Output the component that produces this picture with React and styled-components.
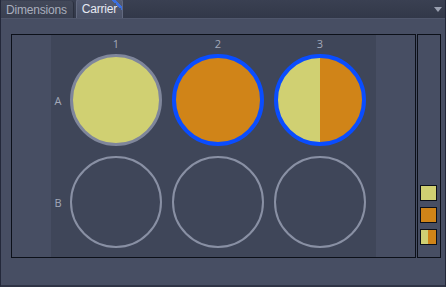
import React from "react";
import styled, { createGlobalStyle, css } from "styled-components";

const YELLOW = "#d0d072";
const ORANGE = "#d08418";
const BLUE = "#0a4dff";
const GREY_RING = "#8990a4";

const Global = createGlobalStyle`
  html, body { margin: 0; padding: 0; background: #474e63; }
  body { font-family: "Liberation Sans", "Open Sans", sans-serif; }
`;

const Window = styled.div`
  width: 446px;
  height: 287px;
  box-sizing: border-box;
  background: #474e63;
  border-left: 1px solid #23283a;
  border-right: 1px solid #23283a;
  border-bottom: 2px solid #2f3446;
  display: flex;
  flex-direction: column;
  overflow: hidden;
`;

const TabBar = styled.div`
  height: 19px;
  flex: none;
  display: flex;
  align-items: flex-end;
  background: linear-gradient(#3a4052, #323849);
  border-bottom: 1px solid #50576c;
  box-sizing: border-box;
  margin-left: -1px;
  margin-right: -1px;
`;

const Tab = styled.div`
  position: relative;
  height: ${(p) => (p.$active ? 19 : 17)}px;
  box-sizing: border-box;
  display: flex;
  align-items: center;
  padding: 0 ${(p) => (p.$active ? 5 : 6)}px;
  font-size: 12px;
  letter-spacing: -0.2px;
  border-radius: 3px 3px 0 0;
  margin-right: 2px;
  ${(p) =>
    p.$active
      ? css`
          color: #e6e9f2;
          background: linear-gradient(#555c73, #4a5166);
          border: 1px solid #62697f;
          border-bottom: none;
        `
      : css`
          color: #a9aebd;
          background: linear-gradient(#424859, #3a4051);
          border-right: 1px solid #2a2f3e;
        `}
`;

const Corner = styled.span`
  position: absolute;
  top: 0;
  right: 0;
  width: 10px;
  height: 10px;
  background: linear-gradient(45deg, transparent 50%, #3c6fe0 50%, #3c6fe0 70%, transparent 70%);
  border-top-right-radius: 3px;
`;

const Spacer = styled.div`
  flex: 1;
`;

const DropArrow = styled.div`
  align-self: center;
  width: 0;
  height: 0;
  margin-right: 4px;
  border-left: 4px solid transparent;
  border-right: 4px solid transparent;
  border-top: 5px solid #9aa0b0;
`;

const Body = styled.div`
  display: flex;
  padding: 15px 0 0 10px;
`;

const Frame = styled.div`
  width: 405px;
  height: 224px;
  box-sizing: border-box;
  border: 1px solid #0c1019;
  display: flex;
`;

const SideCol = styled.div`
  width: 39px;
  background: #474e63;
`;

const Plate = styled.div`
  width: 325px;
  background: #3f4659;
  display: grid;
  grid-template-columns: 14px repeat(3, 102px);
  grid-template-rows: 14px 102px 102px;
  align-content: start;
`;

const Label = styled.div`
  display: flex;
  align-items: ${(p) => (p.$col ? "flex-end" : "center")};
  justify-content: center;
  font-family: "Open Sans", "Liberation Sans", sans-serif;
  font-size: 11px;
  line-height: 11px;
  color: #a3a9b9;
  padding-top: ${(p) => (p.$col ? 3 : 0)}px;
`;

const Cell = styled.div`
  display: flex;
  align-items: center;
  justify-content: center;
`;

const Well = styled.div`
  width: 92px;
  height: 92px;
  box-sizing: border-box;
  border-radius: 50%;
  ${(p) =>
    p.$kind === "empty"
      ? css`
          border: 2px solid ${GREY_RING};
        `
      : p.$kind === "yellow"
      ? css`
          background: ${YELLOW};
          border: 3px solid #7f869b;
        `
      : p.$kind === "orange"
      ? css`
          background: ${ORANGE};
          border: 4px solid ${BLUE};
        `
      : css`
          background: linear-gradient(to right, ${YELLOW} 50%, ${ORANGE} 50%);
          border: 4px solid ${BLUE};
        `}
`;

const Legend = styled.div`
  width: 24px;
  height: 224px;
  box-sizing: border-box;
  border: 1px solid #0c1019;
  margin-left: 1px;
  display: flex;
  flex-direction: column;
  justify-content: flex-end;
  gap: 6px;
  padding: 0 0 12px 2px;
`;

const Swatch = styled.div`
  width: 17px;
  height: 16px;
  box-sizing: border-box;
  border: 1px solid #0c1019;
  background: ${(p) => p.$bg};
`;

const wells = [
  ["A", ["yellow", "orange", "split"]],
  ["B", ["empty", "empty", "empty"]],
];

export default function App() {
  return (
    <>
      <Global />
      <Window>
        <TabBar>
          <Tab>Dimensions</Tab>
          <Tab $active>
            Carrier
            <Corner />
          </Tab>
          <Spacer />
          <DropArrow />
        </TabBar>
        <Body>
          <Frame>
            <SideCol />
            <Plate>
              <div />
              {[1, 2, 3].map((n) => (
                <Label key={n} $col>
                  {n}
                </Label>
              ))}
              {wells.map(([row, kinds]) => (
                <React.Fragment key={row}>
                  <Label>{row}</Label>
                  {kinds.map((k, i) => (
                    <Cell key={i}>
                      <Well $kind={k} />
                    </Cell>
                  ))}
                </React.Fragment>
              ))}
            </Plate>
            <SideCol />
          </Frame>
          <Legend>
            <Swatch $bg={YELLOW} />
            <Swatch $bg={ORANGE} />
            <Swatch $bg={`linear-gradient(to right, ${YELLOW} 50%, ${ORANGE} 50%)`} />
          </Legend>
        </Body>
      </Window>
    </>
  );
}
